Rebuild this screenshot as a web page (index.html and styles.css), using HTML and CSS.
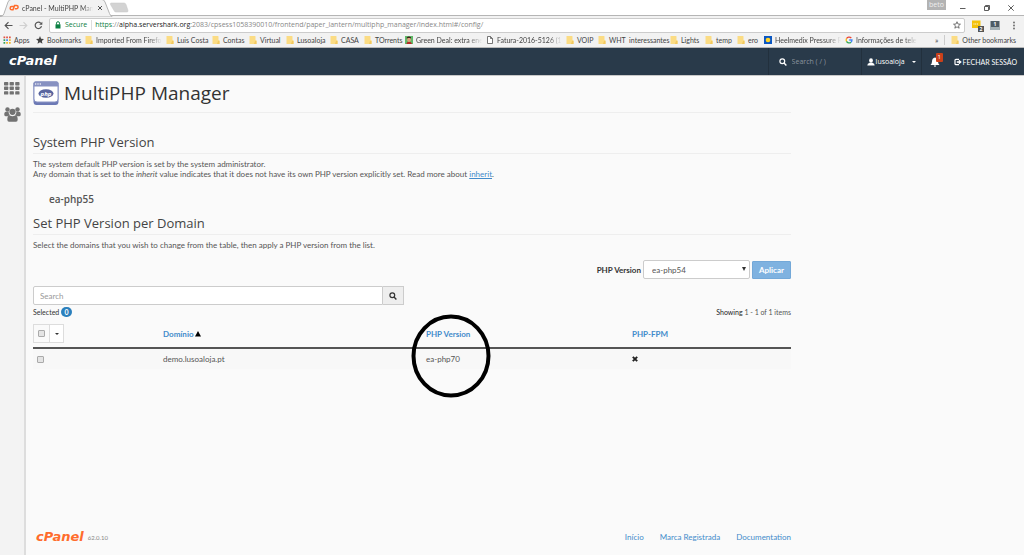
FILE: index.html
```html
<!DOCTYPE html>
<html lang="pt">
<head>
<meta charset="utf-8">
<title>cPanel - MultiPHP Manager</title>
<link rel="stylesheet" href="styles.css">
</head>
<body>
<svg class="defs" width="0" height="0" aria-hidden="true">
  <symbol id="folder" viewBox="0 0 8 8"><path d="M.5 0H6q.5 0 .5.5V4h.5q.5 0 .5.5V8H.5z" fill="#fbdc84"/><path d="M6 5h1.500v3H5z" fill="#f3c95f"/></symbol>
  <symbol id="search" viewBox="0 0 8 8"><circle cx="3.300" cy="3.300" r="2.400" fill="none" stroke="currentColor" stroke-width="1.200"/><path d="M5 5l2.400 2.400" stroke="currentColor" stroke-width="1.400"/></symbol>
</svg>

<div class="chrome">
  <div class="tabs">
    <svg class="tab-shape" width="130" height="18" viewBox="0 0 130 18" aria-hidden="true">
      <path d="M0 17.500H1.500Q3 17 4 14.500L8 3Q9 .5 11 .5H102Q104 .5 105 3L109.500 14.500Q110.500 17 112 17.500V18H0z" fill="#f2f2f2" stroke="#b5b5b5"/>
      <path d="M111 4H124q1.500 0 2 1.500l2 6q.3 1.500-1 1.500H116q-1.500 0-2-1.500l-3.500-6q-.5-1.500.5-1.500z" fill="#d3d3d3" stroke="#c6c6c6" stroke-width=".5"/>
    </svg>
    <div class="tab">
      <svg width="10" height="8" viewBox="0 0 10 8" fill="none" stroke="#ff6c2c" stroke-width="1.500"><path d="M4.700 2.500H2.800a1.600 1.600 0 0 0 0 3.300H4l1.600-4.300H7.500a1.500 1.500 0 0 1 0 3.200H5.800"/></svg>
      <span class="tab-title">cPanel - MultiPHP Mana</span>
      <button class="plain" aria-label="Close tab"><svg width="6" height="6" viewBox="0 0 6 6" stroke="#555"><path d="M1 1l4 4M5 1L1 5"/></svg></button>
    </div>
    <div class="window-buttons">
      <span class="profile">beto</span>
      <button class="plain" aria-label="Minimize"><svg width="8" height="8" viewBox="0 0 8 8" stroke="#333" stroke-width=".8"><path d="M1 4.500h5.500"/></svg></button>
      <button class="plain" aria-label="Restore"><svg width="8" height="8" viewBox="0 0 8 8" fill="none" stroke="#333" stroke-width=".8"><path d="M1.500 2.500h4v4h-4zM2.500 2V1.500h4v4H6"/></svg></button>
      <button class="plain" aria-label="Close"><svg width="8" height="8" viewBox="0 0 8 8" stroke="#333" stroke-width=".8"><path d="M1.300 1.300l5.400 5.400M6.700 1.300L1.300 6.700"/></svg></button>
    </div>
  </div>
  <div class="toolbar">
    <button class="plain" aria-label="Back"><svg width="9" height="9" viewBox="0 0 9 9" fill="none" stroke="#555" stroke-width="1.200"><path d="M8.500 4.500H1.500M4.500 1.200L1.200 4.500l3.300 3.300"/></svg></button>
    <button class="plain" aria-label="Forward"><svg width="9" height="9" viewBox="0 0 9 9" fill="none" stroke="#d0d0d0" stroke-width="1.200"><path d="M.5 4.500h7M4.500 1.200l3.300 3.300-3.300 3.300"/></svg></button>
    <button class="plain" aria-label="Reload"><svg width="9" height="9" viewBox="0 0 9 9" fill="none" stroke="#555" stroke-width="1.200"><path d="M7.500 5.200A3.200 3.200 0 1 1 6.800 2.300"/><path d="M8.300.7v3.100H5.200z" fill="#555" stroke="none"/></svg></button>
    <div class="address">
      <svg width="6" height="8" viewBox="0 0 6 8"><path d="M.5 3.300h5V7.500h-5z" fill="#0b8043"/><path d="M1.500 3.500V2.200a1.500 1.500 0 0 1 3 0v1.300" fill="none" stroke="#0b8043"/></svg>
      <span class="secure">Secure</span>
      <span class="url"><span class="green">https</span>://<b>alpha.servershark.org</b>:2083/cpsess1058390010/frontend/paper_lantern/multiphp_manager/index.html#/config/</span>
      <svg width="8" height="8" viewBox="0 0 10 10" fill="none" stroke="#555"><path d="M5 .9l1.200 2.900 3.100.2-2.400 2 .8 3L5 7.300 2.300 9l.8-3-2.400-2 3.100-.2z"/></svg>
    </div>
    <svg width="13" height="13" viewBox="0 0 13 13"><path d="M1 1.500h8.500v7.500H1z" fill="#f4c20d"/><path d="M2.500 5h5" stroke="#fff" stroke-dasharray="1 .7"/><path d="M7 7h6v6H7z" fill="#555"/><text x="10" y="12" text-anchor="middle" class="tiny">2</text></svg>
    <svg width="10" height="11" viewBox="0 0 10 11"><path d="M.5 1h9v9h-9z" fill="#4e5c64"/><path d="M.5 7h9v3h-9z" fill="#a4b0b4"/><text x="5" y="6" text-anchor="middle" class="tiny">1</text></svg>
    <button class="plain menu" aria-label="Menu"><svg width="4" height="9" viewBox="0 0 4 9" fill="#666"><circle cx="2" cy="1.500" r=".9"/><circle cx="2" cy="4.500" r=".9"/><circle cx="2" cy="7.500" r=".9"/></svg></button>
  </div>
  <div class="bookmarks">
    <span><svg viewBox="0 0 8 8"><path d="M.5.5h1.700v1.700H.5zM3.200.5h1.700v1.700H3.200zM6 .5h1.700v1.700H6z" fill="#e0503f"/><path d="M.5 3.200h1.700v1.700H.5zM.5 6h1.700v1.700H.5z" fill="#36a35a"/><path d="M3.200 3.200h1.700v1.700H3.200z" fill="#4285f4"/><path d="M6 3.200h1.700v1.700H6zM3.200 6h1.700v1.700H3.200zM6 6h1.700v1.700H6z" fill="#f0b429"/></svg>Apps</span>
    <span><svg viewBox="0 0 10 10"><path d="M5 0l1.400 3.400 3.600.3-2.700 2.400.8 3.600L5 7.800 1.900 9.700l.8-3.600L0 3.700l3.600-.3z" fill="#444"/></svg>Bookmarks</span>
    <span class="fade"><svg><use href="#folder"/></svg>Imported From Firefo</span>
    <span><svg><use href="#folder"/></svg>Luis Costa</span>
    <span><svg><use href="#folder"/></svg>Contas</span>
    <span><svg><use href="#folder"/></svg>Virtual</span>
    <span><svg><use href="#folder"/></svg>Lusoaloja</span>
    <span><svg><use href="#folder"/></svg>CASA</span>
    <span><svg><use href="#folder"/></svg>TOrrents</span>
    <span class="fade"><svg viewBox="0 0 8 8"><path d="M0 0h8v8H0z" fill="#62b96a"/><path d="M1.500 8Q1.500 5.500 4 5.500T7 8z" fill="#b52b27"/><path d="M2.200 2h3.600v2.500q-1.800 3-3.600 0z" fill="#dda27c"/><path d="M1.800 2.800V1.200Q4 0 6 1.200v1.600L5 2H3z" fill="#3b221a"/></svg>Green Deal: extra ene</span>
    <span class="fade"><svg viewBox="0 0 8 8" fill="#fff" stroke="#555" stroke-width=".8"><path d="M1.500.5h3l2 2v5h-5zM4.500.5v2h2"/></svg>Fatura-2016-5126 (19</span>
    <span><svg><use href="#folder"/></svg>VOIP</span>
    <span><svg><use href="#folder"/></svg>WHT&nbsp; interessantes</span>
    <span><svg><use href="#folder"/></svg>Lights</span>
    <span><svg><use href="#folder"/></svg>temp</span>
    <span><svg><use href="#folder"/></svg>ero</span>
    <span class="fade"><svg viewBox="0 0 8 8"><path d="M0 0h8v8H0z" fill="#0b57c2"/><circle cx="4" cy="4" r="2.300" fill="#ffd42a"/></svg>Heelmedix Pressure R</span>
    <span class="fade"><svg viewBox="0 0 8 8" fill="none" stroke-width="1.300"><path d="M6.300 2A3 3 0 0 0 1.500 2.600" stroke="#ea4335"/><path d="M1.500 2.600a3 3 0 0 0 0 2.800" stroke="#fbbc05"/><path d="M1.500 5.400A3 3 0 0 0 6 6.200" stroke="#34a853"/><path d="M6 6.200A3 3 0 0 0 7 4H4.200" stroke="#4285f4"/></svg>Informações de telefo</span>
    <span class="more">»</span>
    <span class="other"><svg><use href="#folder"/></svg>Other bookmarks</span>
  </div>
</div>

<header class="topbar">
  <a class="logo" href="#">cPanel</a>
  <label class="top-search"><svg width="8" height="8"><use href="#search"/></svg><input type="text" placeholder="Search ( / )" aria-label="Search"></label>
  <button class="plain user"><svg width="8" height="8" viewBox="0 0 8 8" fill="#fff"><ellipse cx="4" cy="2.500" rx="1.900" ry="2.300"/><path d="M.3 7.500Q.3 5.500 2.700 4.800h2.600Q7.700 5.500 7.700 7.500z"/></svg>lusoaloja<i class="caret"></i></button>
  <button class="plain bell" aria-label="Notifications"><svg width="10" height="10" viewBox="0 0 10 10" fill="#fff"><path d="M5 .5q3 .5 3 4 0 2 1.500 3.500H.5Q2 6.500 2 4.500q0-3.500 3-4zM3.800 8.500h2.400q-.2 1.300-1.200 1.300T3.800 8.500z"/></svg><span class="badge">1</span></button>
  <a class="logout" href="#"><svg width="8" height="8" viewBox="0 0 8 8" fill="none" stroke="#fff" stroke-width="1.200"><path d="M5 1.300H2Q1 1.300 1 2.300v3.400q0 1 1 1h3"/><path d="M2.800 3.200h2V1.500L7.800 4 4.800 6.500V4.800h-2z" fill="#fff" stroke="none"/></svg>FECHAR SESSÃO</a>
</header>

<div class="page">
  <nav class="sidebar">
    <a href="#" aria-label="Home"><svg width="16" height="13" viewBox="0 0 16 13" fill="#727272"><rect width="4.300" height="3.400" rx=".7"/><rect x="5.600" width="4.300" height="3.400" rx=".7"/><rect x="11.200" width="4.300" height="3.400" rx=".7"/><rect y="4.600" width="4.300" height="3.400" rx=".7"/><rect x="5.600" y="4.600" width="4.300" height="3.400" rx=".7"/><rect x="11.200" y="4.600" width="4.300" height="3.400" rx=".7"/><rect y="9.200" width="4.300" height="3.400" rx=".7"/><rect x="5.600" y="9.200" width="4.300" height="3.400" rx=".7"/><rect x="11.200" y="9.200" width="4.300" height="3.400" rx=".7"/></svg></a>
    <a href="#" aria-label="Users"><svg width="17" height="15" viewBox="0 0 17 15" fill="#727272"><circle cx="3.500" cy="2.500" r="2.200"/><circle cx="13.500" cy="2.500" r="2.200"/><circle cx="8.500" cy="4.800" r="3.100"/><path d="M.3 8V6.500Q.5 4.800 2 4.800h2.600Q4.500 7 6 8.200 4.800 8.300 4 9.200H1.500Q.3 9 .3 8zM16.700 8V6.500q-.2-1.700-1.700-1.700h-2.600Q12.500 7 11 8.200q1.200.1 2 1h2.500q1.200-.2 1.200-1.200zM3.300 12.500q0-4.100 2.500-4.100 2.700 1.600 5.400 0 2.500 0 2.500 4.100 0 2.200-1.700 2.200H5q-1.700 0-1.700-2.200z"/></svg></a>
  </nav>
  <main class="content">
    <h1><svg width="26" height="25" viewBox="0 0 26 25"><path d="M.5 2.500q0-2 2-2h21q2 0 2 2v18q0 3.500-3 3.500h-19q-3 0-3-3.500z" fill="#6c79b5"/><path d="M1 4.500h24V18q0 3-3 3H4q-3 0-3-3z" fill="#fff" stroke="#8b95c4"/><path d="M.5 5.500v-3q0-2 2-2h21q2 0 2 2v3z" fill="#8791c1"/><g fill="#fff"><circle cx="2.700" cy="3" r=".7"/><circle cx="5" cy="3" r=".7"/><circle cx="7.300" cy="3" r=".7"/></g><ellipse cx="13" cy="12.500" rx="7.500" ry="4.300" fill="#59659f"/><text x="13" y="14.500" text-anchor="middle" class="php">php</text></svg>MultiPHP Manager</h1>

    <h2>System PHP Version</h2>
    <p>The system default PHP version is set by the system administrator.<br>Any domain that is set to the <em>inherit</em> value indicates that it does not have its own PHP version explicitly set. Read more about <a href="#">inherit</a>.</p>
    <div class="system-version">ea-php55</div>

    <h2>Set PHP Version per Domain</h2>
    <p>Select the domains that you wish to change from the table, then apply a PHP version from the list.</p>

    <div class="apply">
      <label for="version">PHP Version</label>
      <span class="select"><select id="version"><option>ea-php54</option><option>ea-php55</option><option>ea-php70</option></select></span>
      <button class="primary">Aplicar</button>
    </div>

    <div class="filter">
      <input type="text" placeholder="Search" aria-label="Search domains">
      <button aria-label="Search"><svg width="8" height="8"><use href="#search"/></svg></button>
    </div>

    <div class="status"><span>Selected <span class="count">0</span></span><span class="showing"><b>Showing</b> 1 - 1 of 1 items</span></div>

    <div class="table-area">
      <table>
        <thead><tr>
          <th class="pick"><span class="pick-group"><span><input type="checkbox" aria-label="Select all"></span><button aria-label="Selection options"><i class="caret"></i></button></span></th>
          <th class="domain"><a href="#">Domínio</a> <svg width="6" height="6" viewBox="0 0 6 6"><path d="M3 0l3 5.500H0z"/></svg></th>
          <th class="version"><a href="#">PHP Version</a></th>
          <th><a href="#">PHP-FPM</a></th>
        </tr></thead>
        <tbody><tr>
          <td><input type="checkbox" aria-label="demo.lusoaloja.pt"></td>
          <td>demo.lusoaloja.pt</td>
          <td>ea-php70</td>
          <td><svg width="6" height="6" viewBox="0 0 6 6" stroke="#222" stroke-width="1.900"><path d="M.8.8l4.400 4.400M5.200.8L.8 5.200"/></svg></td>
        </tr></tbody>
      </table>
      <svg class="circle" width="80" height="84" viewBox="0 0 80 84" aria-hidden="true"><ellipse cx="40" cy="42" rx="37.500" ry="39.500" fill="none" stroke="#000" stroke-width="4"/></svg>
    </div>

    <footer>
      <a class="logo orange" href="#">cPanel</a><span class="release">62.0.10</span>
      <nav><a href="#">Início</a><a href="#">Marca Registrada</a><a href="#">Documentation</a></nav>
    </footer>
  </main>
</div>
</body>
</html>
```

FILE: styles.css
```css
* { box-sizing: border-box; }
body {
  margin: 0;
  min-height: 100vh;
  display: flex;
  flex-direction: column;
  background: #fafafa;
  color: #555;
  font: 7px/10px "Open Sans", "Noto Sans", sans-serif;
}
svg { display: block; flex: none; }
.defs { position: absolute; }
a { color: #428bca; text-decoration: none; }
button, input, select { font: inherit; color: inherit; margin: 0; }
.plain { border: 0; background: none; padding: 0; display: flex; align-items: center; }
.tiny { font-size: 5px; font-weight: 700; fill: #fff; }
.caret { border: 2px solid transparent; border-top-color: currentColor; border-bottom: 0; }

/* Browser frame */
.chrome { background: #f2f2f2; border-bottom: 1px solid #b8b8b8; color: #444; }
.tabs {
  display: flex;
  justify-content: space-between;
  height: 16px;
  position: relative;
  background: #fff;
  border-bottom: 1px solid #b5b5b5;
}
.tab-shape { position: absolute; left: 0; top: -1px; }
.tab { position: relative; display: flex; align-items: center; width: 106px; padding-left: 9px; gap: 3px; }
.tab-title {
  width: 71px;
  font: 7px/10px Lato, sans-serif;
  white-space: nowrap;
  mask-image: linear-gradient(to right, #000 85%, transparent);
}
.tab .plain { margin-left: 1px; }
.window-buttons { display: flex; align-items: center; gap: 16px; padding-right: 9px; }
.profile { width: 19px; height: 10px; margin: 0 -3px 6px 0; background: #b3b3b3; color: #eee; line-height: 10px; text-align: center; }
.toolbar { display: flex; align-items: center; height: 17px; padding: 1px 8px 0 4px; gap: 6px; }
.toolbar .menu { margin-left: 6px; }
.address {
  flex: 1;
  display: flex;
  align-items: center;
  height: 15px;
  padding: 0 3px 0 5px;
  background: #fff;
  border: 1px solid #ccc;
  border-radius: 2px;
  min-width: 0;
}
.secure { color: #0b8043; margin-left: 4px; padding-right: 4px; border-right: 1px solid #ddd; }
.url { flex: 1; padding-left: 3px; color: #888; white-space: nowrap; overflow: hidden; }
.url b { font-weight: 400; color: #222; }
.green { color: #0b8043; }
.bookmarks {
  display: grid;
  grid-template-columns: 33px 49px 81px 46px 37px 37px 44px 34px 41px 81px 80px 32px 72px 35px 32px 27px 81px 76px 1fr auto;
  align-items: center;
  height: 14px;
  padding: 0 8px 0 3px;
  font: 7px/10px Lato, sans-serif;
}
.bookmarks span { display: flex; align-items: center; gap: 3px; white-space: nowrap; }
.bookmarks svg { width: 8px; height: 8px; }
.bookmarks .fade { margin-right: 4px; mask-image: linear-gradient(to right, #000 82%, transparent); }
.bookmarks .more { justify-content: flex-end; padding-right: 6px; font-size: 8px; }
.bookmarks .other { padding-left: 6px; border-left: 1px solid #ccc; }

/* cPanel header */
.topbar { display: flex; height: 28px; background: #293a4a; border-bottom: 1px solid #c8c8c8; color: #fff; }
.logo { color: #fff; font: italic 700 13px/26px "DejaVu Sans", sans-serif; }
.topbar .logo { flex: 1; padding-left: 9px; }
.topbar > * + * { border-left: 1px solid #22303d; }
.top-search { display: flex; align-items: center; gap: 5px; width: 93px; padding-left: 10px; }
.top-search input { width: 60px; border: 0; padding: 0; background: none; }
.top-search input::placeholder { color: #8a949e; opacity: 1; }
.user { width: 60px; padding-left: 5px; gap: 1px; color: #fff; }
.user .caret { margin-left: 6px; }
.bell { position: relative; width: 26px; padding-left: 8px; }
.badge { position: absolute; left: 14px; top: 5px; width: 7px; height: 9px; background: #c9401a; border-radius: 1px; color: #fff; font-size: 6px; line-height: 8px; text-align: center; }
.topbar .logout { display: flex; align-items: center; gap: 1px; color: #fff; padding: 0 7px; border: 0; font: 7px/10px Lato, sans-serif; white-space: nowrap; }

/* Page frame */
.page { flex: 1; display: flex; font: 8px/10px Lato, "Open Sans", sans-serif; }
.sidebar { width: 26px; padding: 6px 4px; background: #f3f3f3; border-right: 2px solid #ddd; display: flex; flex-direction: column; gap: 12px; }
.content { flex: 1; display: flex; flex-direction: column; max-width: 773px; padding: 0 8px 0 7px; }
h1, h2 { margin: 0; font-family: "Open Sans", sans-serif; font-weight: 400; color: #444; border-bottom: 1px solid #eee; }
h1 { display: flex; align-items: center; gap: 5px; height: 37px; padding-bottom: 2px; font-size: 19px; line-height: 26px; color: #333; }
.php { font: italic 700 6px "Open Sans", sans-serif; fill: #fff; }
h2 { margin-top: 20px; height: 21px; font-size: 13px; line-height: 19px; }
p { margin: 5px 0 0; }
p a { text-decoration: underline; }
.system-version { margin: 13px 0 0 16px; font: 600 10px/14px "Open Sans", sans-serif; }
.system-version + h2 { margin-top: 8px; }

/* Controls */
.apply { display: flex; justify-content: flex-end; align-items: center; margin-top: 10px; gap: 2px; }
.apply label { font-weight: 700; color: #333; }
.select { position: relative; width: 107px; }
.select select { width: 100%; height: 19px; padding: 0 8px; appearance: none; background: #fff; border: 1px solid #ccc; border-radius: 2px; }
.select::after { content: ""; position: absolute; right: 4px; top: 7px; border: 2px solid transparent; border-top: 4px solid #333; border-bottom: 0; pointer-events: none; }
.primary { height: 18px; padding: 0 6px; background: #7fb2e0; border: 1px solid #73a8d8; border-radius: 1px; color: #fff; font-weight: 700; }
.filter { display: flex; width: 49%; height: 19px; margin-top: 7px; }
.filter input { flex: 1; min-width: 0; padding: 0 6px; background: #fff; border: 1px solid #ccc; border-radius: 2px 0 0 2px; }
.filter input::placeholder { color: #999; opacity: 1; }
.filter button { display: flex; align-items: center; justify-content: center; width: 21px; padding: 0; background: #eee; border: 1px solid #ccc; border-left: 0; color: #333; }
.status { display: flex; justify-content: space-between; margin-top: 2px; font-size: 7px; color: #333; }
.count { display: inline-block; width: 11px; border-radius: 5px; background: #2b80bd; color: #fff; font-weight: 700; text-align: center; }
.showing { color: #555; }
.showing b { font-weight: 400; color: #222; }

/* Domain table */
.table-area { position: relative; margin-top: 5px; }
table { width: 100%; border-collapse: collapse; table-layout: fixed; }
th, td { padding: 0; text-align: left; vertical-align: middle; }
th { height: 26px; padding-bottom: 2px; border-bottom: 2px solid #555; }
th svg { display: inline-block; }
td { height: 21px; }
tbody tr { background: #f8f8f8; }
.pick { width: 130px; }
.domain { width: 263px; }
.version { width: 206px; }
input[type="checkbox"] { display: block; appearance: none; width: 7px; height: 7px; border: 1px solid #aaa; border-radius: 1px; background: #e4e4e4; }
td input[type="checkbox"] { margin-left: 4px; }
.pick-group { display: flex; }
.pick-group span { display: flex; align-items: center; padding: 0 4px; height: 19px; border: 1px solid #ddd; }
.pick-group button { width: 14px; height: 19px; display: flex; align-items: center; justify-content: center; padding: 0; background: #fff; border: 1px solid #ddd; border-left: 0; color: #333; }
.circle { position: absolute; left: 378px; top: -8px; }

/* Footer */
footer { display: flex; align-items: center; margin-top: auto; padding: 0 0 6px 3px; }
.orange { color: #ff6c2c; line-height: 24px; }
.release { margin-left: 4px; padding-top: 2px; font-size: 6px; color: #888; }
footer nav { display: flex; gap: 16px; margin-left: auto; }
```
